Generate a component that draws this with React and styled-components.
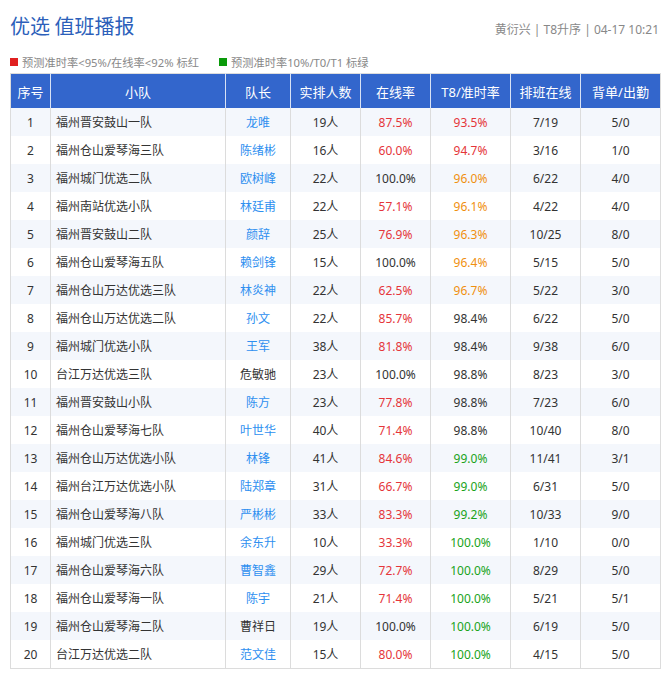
import React from "react";
import styled, { createGlobalStyle } from "styled-components";

const Global = createGlobalStyle`
  html, body { margin: 0; padding: 0; background: #fff; }
  body { font-family: "Noto Sans", "Noto Sans CJK SC", sans-serif; }
`;

const Page = styled.div`
  width: 670px;
  padding: 10px 10px 0 10px;
  box-sizing: border-box;
`;

const TopBar = styled.div`
  display: flex;
  justify-content: space-between;
  align-items: flex-end;
  height: 28px;
`;

const Title = styled.h1`
  margin: 0 0 -2px 0;
  font-size: 20px;
  font-weight: 400;
  line-height: 28px;
  color: #2c5fba;
  font-family: "Noto Sans CJK SC", "Noto Sans", sans-serif;
`;

const Meta = styled.div`
  font-size: 12px;
  color: #888;
  line-height: 16px;
  margin-right: 1px;
`;

const Legend = styled.div`
  display: flex;
  gap: 20px;
  margin-top: 16px;
  height: 16px;
  align-items: center;
`;

const LegendItem = styled.div`
  display: flex;
  align-items: center;
  gap: 4px;
  font-size: 11.25px;
  color: #888;
`;

const Swatch = styled.span`
  width: 8px;
  height: 8px;
  background: ${(p) => p.$color};
  display: inline-block;
`;

const Table = styled.table`
  margin-top: 3px;
  width: 650px;
  border-collapse: collapse;
  table-layout: fixed;
  border: 1px solid #dcdcdc;
  font-size: 12px;
  color: #333;
`;

const Th = styled.th`
  height: 34px;
  padding: 0;
  background: #3366cc;
  color: #fff;
  font-weight: 400;
  font-size: 13px;
  border-left: 1px solid #d8e2f5;
  &:first-child { border-left: none; }
`;

const Tr = styled.tr`
  background: ${(p) => (p.$alt ? "#f4f7fc" : "#fff")};
`;

const Td = styled.td`
  height: 28px;
  padding: 0;
  text-align: ${(p) => (p.$left ? "left" : "center")};
  padding-left: ${(p) => (p.$left ? "5px" : "0")};
  border-left: 1px solid #dcdcdc;
  color: ${(p) => p.$color || "#333"};
  white-space: nowrap;
  &:first-child { border-left: none; }
`;

const RED = "#e5353a";
const ORANGE = "#f0900f";
const GREEN = "#1aa31a";
const BLUE = "#2e8ff0";

const rows = [
  [1, "福州晋安鼓山一队", "龙唯", true, "19人", "87.5%", "93.5%", "7/19", "5/0"],
  [2, "福州仓山爱琴海三队", "陈绪彬", true, "16人", "60.0%", "94.7%", "3/16", "1/0"],
  [3, "福州城门优选二队", "欧树峰", true, "22人", "100.0%", "96.0%", "6/22", "4/0"],
  [4, "福州南站优选小队", "林廷甫", true, "22人", "57.1%", "96.1%", "4/22", "4/0"],
  [5, "福州晋安鼓山二队", "颜辞", true, "25人", "76.9%", "96.3%", "10/25", "8/0"],
  [6, "福州仓山爱琴海五队", "赖剑锋", true, "15人", "100.0%", "96.4%", "5/15", "5/0"],
  [7, "福州仓山万达优选三队", "林炎神", true, "22人", "62.5%", "96.7%", "5/22", "3/0"],
  [8, "福州仓山万达优选二队", "孙文", true, "22人", "85.7%", "98.4%", "6/22", "5/0"],
  [9, "福州城门优选小队", "王军", true, "38人", "81.8%", "98.4%", "9/38", "6/0"],
  [10, "台江万达优选三队", "危敏驰", false, "23人", "100.0%", "98.8%", "8/23", "3/0"],
  [11, "福州晋安鼓山小队", "陈方", true, "23人", "77.8%", "98.8%", "7/23", "6/0"],
  [12, "福州仓山爱琴海七队", "叶世华", true, "40人", "71.4%", "98.8%", "10/40", "8/0"],
  [13, "福州仓山万达优选小队", "林锋", true, "41人", "84.6%", "99.0%", "11/41", "3/1"],
  [14, "福州台江万达优选小队", "陆郑章", true, "31人", "66.7%", "99.0%", "6/31", "5/0"],
  [15, "福州仓山爱琴海八队", "严彬彬", true, "33人", "83.3%", "99.2%", "10/33", "9/0"],
  [16, "福州城门优选三队", "余东升", true, "10人", "33.3%", "100.0%", "1/10", "0/0"],
  [17, "福州仓山爱琴海六队", "曹智鑫", true, "29人", "72.7%", "100.0%", "8/29", "5/0"],
  [18, "福州仓山爱琴海一队", "陈宇", true, "21人", "71.4%", "100.0%", "5/21", "5/1"],
  [19, "福州仓山爱琴海二队", "曹祥日", false, "19人", "100.0%", "100.0%", "6/19", "5/0"],
  [20, "台江万达优选二队", "范文佳", true, "15人", "80.0%", "100.0%", "4/15", "5/0"],
];

const onlineColor = (v) => (parseFloat(v) < 92 ? RED : "#333");
const t8Color = (v) => {
  const n = parseFloat(v);
  if (n < 95) return RED;
  if (n < 98) return ORANGE;
  if (n >= 99) return GREEN;
  return "#333";
};

const widths = [40, 175, 65, 70, 70, 80, 70, 80];
const heads = ["序号", "小队", "队长", "实排人数", "在线率", "T8/准时率", "排班在线", "背单/出勤"];

export default function App() {
  return (
    <>
      <Global />
      <Page>
        <TopBar>
          <Title>优选 值班播报</Title>
          <Meta>黄衍兴 | T8升序 | 04-17 10:21</Meta>
        </TopBar>
        <Legend>
          <LegendItem>
            <Swatch $color="#e02020" />
            预测准时率&lt;95%/在线率&lt;92% 标红
          </LegendItem>
          <LegendItem>
            <Swatch $color="#0a9a0a" />
            预测准时率10%/T0/T1 标绿
          </LegendItem>
        </Legend>
        <Table>
          <colgroup>
            {widths.map((w, i) => (
              <col key={i} style={{ width: w }} />
            ))}
          </colgroup>
          <thead>
            <tr>
              {heads.map((h) => (
                <Th key={h}>{h}</Th>
              ))}
            </tr>
          </thead>
          <tbody>
            {rows.map((r, i) => (
              <Tr key={r[0]} $alt={i % 2 === 0}>
                <Td>{r[0]}</Td>
                <Td $left>{r[1]}</Td>
                <Td $color={r[3] ? BLUE : "#333"}>{r[2]}</Td>
                <Td>{r[4]}</Td>
                <Td $color={onlineColor(r[5])}>{r[5]}</Td>
                <Td $color={t8Color(r[6])}>{r[6]}</Td>
                <Td>{r[7]}</Td>
                <Td>{r[8]}</Td>
              </Tr>
            ))}
          </tbody>
        </Table>
      </Page>
    </>
  );
}
